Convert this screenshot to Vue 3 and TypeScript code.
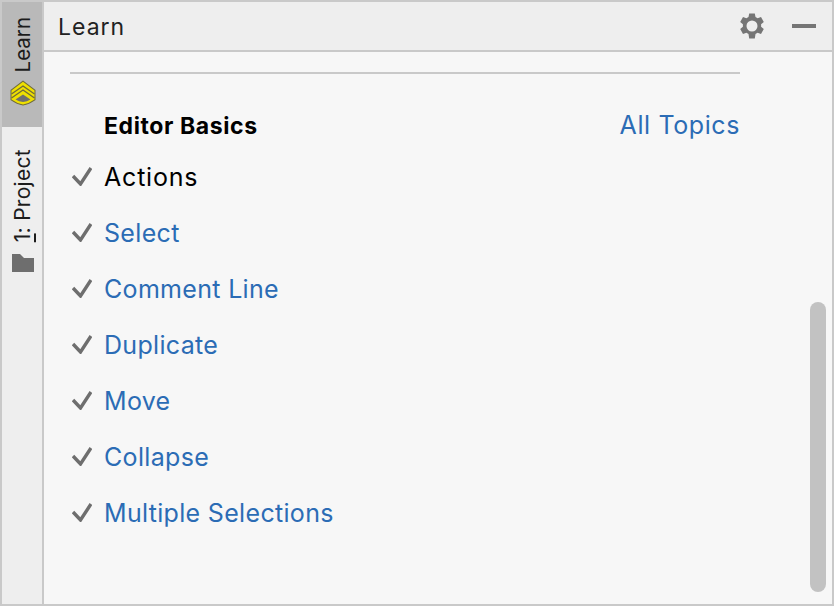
<script setup lang="ts">
const lessons: string[] = ['Select', 'Comment Line', 'Duplicate', 'Move', 'Collapse', 'Multiple Selections']
</script>

<template>
  <div class="window">
    <aside class="rail">
      <div class="tab active">
        <span class="tab-label learn">Learn</span>
        <svg class="tab-icon" width="26" height="26" viewBox="0 0 26 26">
          <path d="M13 0.500 L25.500 10 V20 Q19 24.500 13 25.500 Q7 24.500 0.500 20 V10 Z" fill="#6e6a3a" />
          <path d="M13 1.800 L24.500 10.500 V19.500 Q19 23.500 13 24.500 Q7 23.500 1.500 19.500 V10.500 Z" fill="#efe000" />
          <path d="M1.500 14 L13 6 L24.500 14 M1.500 18 L13 10 L24.500 18" fill="none" stroke="#6e6a3a" stroke-width="1.300" />
          <path d="M5.500 19.500 L13 14.500 L20.500 19.500 Q17 21.500 13 22 Q9 21.500 5.500 19.500 Z" fill="#6f6f6f" />
        </svg>
      </div>
      <div class="tab">
        <span class="tab-label"><u>1</u>: Project</span>
        <svg class="tab-icon folder" width="22" height="18" viewBox="0 0 22 18">
          <path d="M0 0 H8 L12 4 H22 V18 H0 Z" fill="#6e6e6e" />
        </svg>
      </div>
    </aside>
    <main class="panel">
      <header class="head">
        <span class="title">Learn</span>
        <div class="actions">
          <svg width="26" height="26" viewBox="0 0 26 26">
            <path fill="#757575" fill-rule="evenodd" d="M10.200 0.500 H15.800 L16.500 4.100 L18.600 5.300 L22 4.100 L24.800 8.900 L22.100 11.300 V13.700 L24.800 16.100 L22 20.900 L18.600 19.700 L16.500 20.900 L15.800 25.500 H10.200 L9.500 20.900 L7.400 19.700 L4 20.900 L1.200 16.100 L3.900 13.700 V11.300 L1.200 8.900 L4 4.100 L7.400 5.300 L9.500 4.100 Z M13 7.500 A5.500 5.500 0 1 0 13 18.500 A5.500 5.500 0 1 0 13 7.500 Z" />
          </svg>
          <span class="minus"></span>
        </div>
      </header>
      <div class="body">
        <div class="rule"></div>
        <div class="topic">
          <strong>Editor Basics</strong>
          <a class="link all">All Topics</a>
        </div>
        <ul class="list">
          <li class="row">
            <svg class="check" width="20" height="19" viewBox="0 0 20 19"><path d="M1 9 L8.500 17 L19 1" fill="none" stroke="#6e6e6e" stroke-width="3.400" /></svg>
            <span class="current">Actions</span>
          </li>
          <li v-for="item in lessons" :key="item" class="row">
            <svg class="check" width="20" height="19" viewBox="0 0 20 19"><path d="M1 9 L8.500 17 L19 1" fill="none" stroke="#6e6e6e" stroke-width="3.400" /></svg>
            <a class="link">{{ item }}</a>
          </li>
        </ul>
        <div class="thumb"></div>
      </div>
    </main>
  </div>
</template>

<style>
html, body { margin: 0; padding: 0; background: #f7f7f7; }
</style>

<style scoped>
.window {
  box-sizing: border-box;
  width: 834px;
  height: 606px;
  display: flex;
  border: 2px solid #c9c9c9;
  background: #f7f7f7;
  font-family: Inter, "Liberation Sans", sans-serif;
  overflow: hidden;
}
.rail {
  box-sizing: border-box;
  width: 42px;
  flex: none;
  background: #eeeeee;
  border-right: 2px solid #c9c9c9;
}
.tab {
  box-sizing: border-box;
  display: flex;
  flex-direction: column;
  align-items: center;
  padding-top: 22px;
}
.tab.active {
  height: 125px;
  padding-top: 15px;
  background: #b9b9b9;
}
.tab-label {
  writing-mode: vertical-rl;
  transform: rotate(180deg);
  font-size: 21px;
  line-height: 26px;
  letter-spacing: 0.3px;
  margin-left: 2px;
  color: #1c1c1c;
}
.tab-label.learn {
  letter-spacing: 0;
  font-size: 20.500px;
}
.tab-icon { margin-top: 9px; margin-left: 1px; }
.tab.active .tab-icon { margin-top: 8px; }
.tab-icon.folder { margin-top: 12px; margin-left: 2px; }
.panel {
  flex: 1;
  min-width: 0;
  display: flex;
  flex-direction: column;
}
.head {
  box-sizing: border-box;
  height: 50px;
  flex: none;
  display: flex;
  align-items: center;
  justify-content: space-between;
  padding: 1px 16px 0 14px;
  background: #eeeeee;
  border-bottom: 2px solid #c9c9c9;
}
.title {
  font-size: 23px;
  letter-spacing: 1px;
  color: #222222;
}
.actions {
  display: flex;
  align-items: center;
  gap: 27px;
  margin-top: -1px;
}
.minus {
  display: block;
  width: 24px;
  height: 4px;
  background: #757575;
}
.body {
  position: relative;
  flex: 1;
  padding: 20px 0 0 26px;
}
.rule {
  width: 670px;
  height: 2px;
  background: #c9c9c9;
}
.topic {
  width: 670px;
  box-sizing: border-box;
  display: flex;
  justify-content: space-between;
  align-items: baseline;
  height: 32px;
  margin-top: 36px;
  padding-left: 34px;
  font-size: 23px;
  letter-spacing: 0.6px;
}
.topic strong {
  color: #000000;
}
.link {
  color: #2b6cb5;
  font-size: 25px;
  letter-spacing: 0.32px;
}
.link.all {
  letter-spacing: 0.6px;
}
.list {
  list-style: none;
  margin: 7px 0 0;
  padding: 0;
}
.row {
  height: 56px;
  display: flex;
  align-items: center;
  font-size: 25px;
}
.check {
  flex: none;
  width: 20px;
  margin: -2px 12px 0 2px;
}
.current {
  color: #000000;
  letter-spacing: 0.8px;
}
.thumb {
  position: absolute;
  right: 6px;
  top: 250px;
  width: 16px;
  height: 290px;
  border-radius: 8px;
  background: #c2c2c2;
}
</style>
